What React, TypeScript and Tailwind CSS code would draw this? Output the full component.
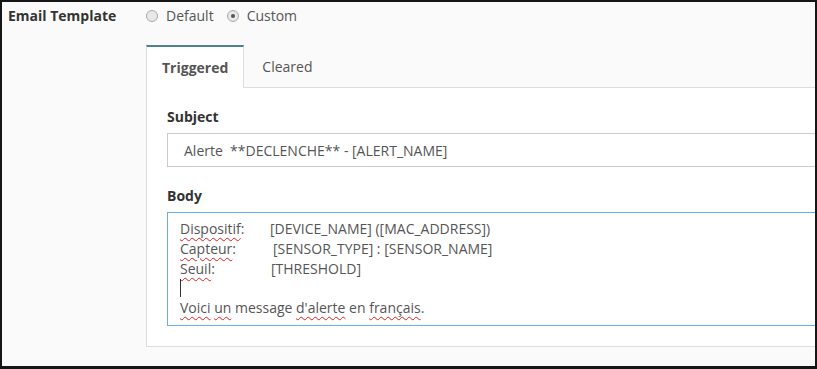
import React from "react";

const font = { fontFamily: '"Open Sans", "Liberation Sans", sans-serif' };

function Radio({ checked }: { checked?: boolean }) {
  return (
    <span className="inline-flex h-[12px] w-[12px] items-center justify-center rounded-full border border-[#a9a9a9] bg-[#e8e8e8]">
      {checked && <span className="h-[4px] w-[4px] rounded-full bg-[#555]" />}
    </span>
  );
}

function Sq({ children }: { children: React.ReactNode }) {
  return (
    <span className="underline decoration-wavy decoration-[#e02020] decoration-[1px] underline-offset-[3px]">
      {children}
    </span>
  );
}

export default function App() {
  return (
    <div
      className="box-border h-[369px] w-[817px] overflow-hidden border-t-2 border-l-2 border-r-2 border-b-[3px] border-[#161616] bg-[#fafafa] text-[#333]"
      style={font}
    >
      <div className="flex h-[28px] items-center">
        <div className="w-[144px] shrink-0 pl-[6px] text-[14px] font-bold leading-[20px] text-[#333]">
          Email Template
        </div>
        <div className="flex items-center text-[14px] leading-[20px] text-[#555]">
          <Radio />
          <span className="ml-[8px]">Default</span>
          <span className="ml-[13px] flex items-center">
            <Radio checked />
          </span>
          <span className="ml-[8px]">Custom</span>
        </div>
      </div>

      <div className="ml-[144px] mt-[15px] w-[760px]">
        <div className="flex h-[42px] items-stretch">
          <div className="relative z-10 -mb-px flex h-[43px] items-center border-t-2 border-l border-r border-t-[#4e7f92] border-l-[#ddd] border-r-[#ddd] bg-white px-[15px] text-[14px] font-bold text-[#555]">
            Triggered
          </div>
          <div className="flex items-center pl-[18px] text-[14px] text-[#555]">
            Cleared
          </div>
        </div>
        <div className="border-t border-l border-b border-[#ddd] bg-white px-[20px] pt-[19px] pb-[20px]">
          <div className="mb-[6px] text-[14px] font-bold leading-[20px] text-[#333]">Subject</div>
          <div className="box-border flex h-[34px] items-center border border-[#ccc] bg-white pl-[16px] text-[14px] text-[#555] whitespace-pre">
            {"Alerte  **DECLENCHE** - [ALERT_NAME]"}
          </div>
          <div className="mt-[19px] mb-[6px] text-[14px] font-bold leading-[20px] text-[#333]">Body</div>
          <div className="box-border h-[114px] border border-[#66afe9] bg-white px-[12px] pt-[6px] text-[14px] leading-[19.75px] text-[#555]">
            <div className="flex">
              <span className="w-[90px] shrink-0">
                <Sq>Dispositif</Sq>:
              </span>
              <span>[DEVICE_NAME] ([MAC_ADDRESS])</span>
            </div>
            <div className="flex">
              <span className="w-[93px] shrink-0">
                <Sq>Capteur</Sq>:
              </span>
              <span>[SENSOR_TYPE] : [SENSOR_NAME]</span>
            </div>
            <div className="flex">
              <span className="w-[91px] shrink-0">
                <Sq>Seuil</Sq>:
              </span>
              <span>[THRESHOLD]</span>
            </div>
            <div className="flex h-[19.75px] items-center">
              <span className="h-[18px] w-px bg-[#333]" />
            </div>
            <div>
              <Sq>Voici</Sq> <Sq>un</Sq> message <Sq>d'alerte</Sq> en <Sq>français</Sq>.
            </div>
          </div>
        </div>
      </div>
    </div>
  );
}
